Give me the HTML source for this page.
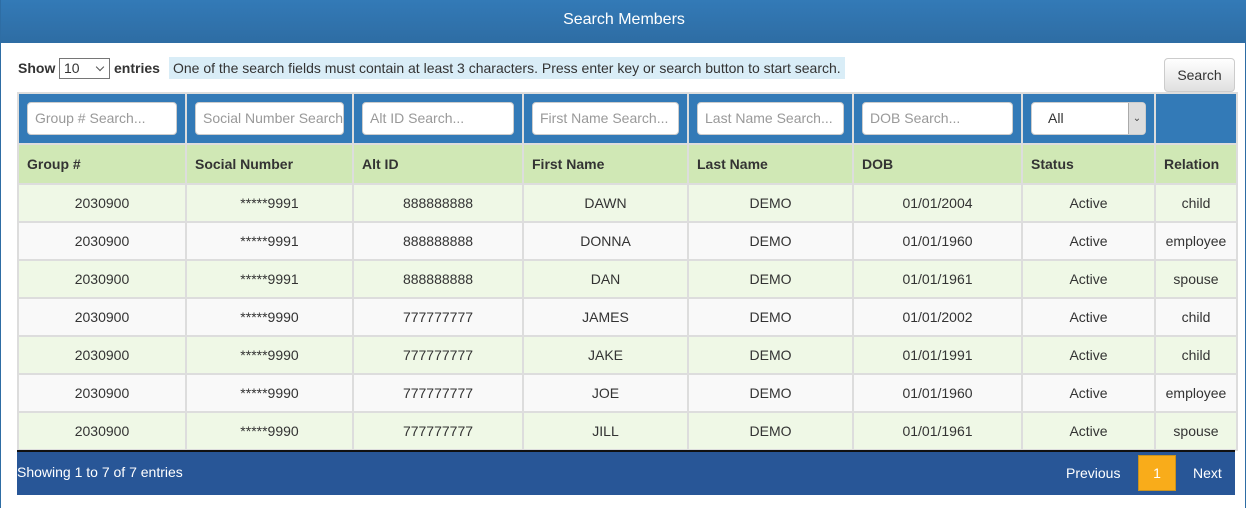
<!DOCTYPE html>
<html><head><style>
*{box-sizing:border-box;margin:0;padding:0}
body{width:1246px;height:508px;background:#fff;font-family:"Liberation Sans",Arial,sans-serif;font-size:14px;color:#333;position:relative;overflow:hidden;border-left:1px solid #2e6da4;border-right:1px solid #2e6da4}
.hdr{position:absolute;left:0;top:0;width:1246px;height:43px;background:linear-gradient(#337ab7,#2e6da4);color:#fff;font-size:16px;text-align:center;line-height:40px;border-bottom:1px solid #2e6da4}
.show{position:absolute;left:17px;top:58px;font-weight:bold;font-size:14px;line-height:20px}
.sel{position:absolute;left:58px;top:58px;width:51px;height:21px;border:1px solid #767676;font-size:14px;padding-left:4px;line-height:19px;font-weight:normal}
.sel:after{content:"";position:absolute;right:6px;top:5px;width:5px;height:5px;border-right:1px solid #555;border-bottom:1px solid #555;transform:rotate(45deg)}
.ent{position:absolute;left:113px;top:58px;font-weight:bold;line-height:20px}
.info{position:absolute;left:168px;top:57px;background:#d9edf7;padding:0 4px;line-height:22px;height:22px}
.sbtn{position:absolute;left:1163px;top:58px;width:71px;height:34px;border:1px solid #ccc;border-radius:4px;background:linear-gradient(#fff,#e0e0e0);text-align:center;line-height:32px}
table{position:absolute;left:16px;top:92px;border-collapse:collapse;table-layout:fixed;width:1219px}
td,th{border:2px solid #ddd}
.f td{background:#337ab7;height:51px;padding:0 8px}
.inp{height:33px;background:#fff;border:1px solid #ccc;border-radius:4px;color:#999;padding:0 7px;line-height:31px;white-space:nowrap;overflow:hidden;font-size:14px;position:relative}
.h th{background:#d0e8b5;height:40px;text-align:left;padding-left:8px;font-size:14px}
.r td{height:38px;text-align:center;background:#f9f9f9}
.r:nth-child(odd) td{background:#eff8e6}
.foot{position:absolute;left:16px;top:450px;width:1218px;height:45px;background:#285697;border-top:2px solid #111;color:#fff}
.foot .s{position:absolute;left:0;top:12px}
.pg{position:absolute;top:13px;font-size:14px}
.one{position:absolute;left:1121px;top:3px;width:38px;height:36px;background:#f9ac1a;border:1px solid #c9921f;text-align:center;line-height:34px}
</style></head><body>
<div class="hdr">Search Members</div>
<div class="show">Show</div><div class="sel">10</div><div class="ent">entries</div>
<div class="info">One of the search fields must contain at least 3 characters. Press enter key or search button to start search.</div>
<div class="sbtn">Search</div>
<table>
<colgroup><col style="width:168px"><col style="width:167px"><col style="width:170px"><col style="width:165px"><col style="width:165px"><col style="width:169px"><col style="width:133px"><col style="width:82px"></colgroup>
<tr class="f"><td><div class="inp">Group # Search...</div></td><td><div class="inp">Social Number Search</div></td><td><div class="inp">Alt ID Search...</div></td><td><div class="inp">First Name Search...</div></td><td><div class="inp">Last Name Search...</div></td><td><div class="inp">DOB Search...</div></td><td><div class="inp" style="color:#333;padding-left:16px">All<span style="position:absolute;right:0;top:0;width:17px;height:31px;background:#ddd;border-left:1px solid #aaa;text-align:center;font-size:10px;color:#444">&#8964;</span></div></td><td></td></tr>
<tr class="h"><th>Group #</th><th>Social Number</th><th>Alt ID</th><th>First Name</th><th>Last Name</th><th>DOB</th><th>Status</th><th>Relation</th></tr>
<tbody>
<tr class="r"><td>2030900</td><td>*****9991</td><td>888888888</td><td>DAWN</td><td>DEMO</td><td>01/01/2004</td><td>Active</td><td>child</td></tr>
<tr class="r"><td>2030900</td><td>*****9991</td><td>888888888</td><td>DONNA</td><td>DEMO</td><td>01/01/1960</td><td>Active</td><td>employee</td></tr>
<tr class="r"><td>2030900</td><td>*****9991</td><td>888888888</td><td>DAN</td><td>DEMO</td><td>01/01/1961</td><td>Active</td><td>spouse</td></tr>
<tr class="r"><td>2030900</td><td>*****9990</td><td>777777777</td><td>JAMES</td><td>DEMO</td><td>01/01/2002</td><td>Active</td><td>child</td></tr>
<tr class="r"><td>2030900</td><td>*****9990</td><td>777777777</td><td>JAKE</td><td>DEMO</td><td>01/01/1991</td><td>Active</td><td>child</td></tr>
<tr class="r"><td>2030900</td><td>*****9990</td><td>777777777</td><td>JOE</td><td>DEMO</td><td>01/01/1960</td><td>Active</td><td>employee</td></tr>
<tr class="r"><td>2030900</td><td>*****9990</td><td>777777777</td><td>JILL</td><td>DEMO</td><td>01/01/1961</td><td>Active</td><td>spouse</td></tr>
</tbody></table>
<div class="foot"><div class="s">Showing 1 to 7 of 7 entries</div><div class="pg" style="left:1049px">Previous</div><div class="one">1</div><div class="pg" style="left:1176px">Next</div></div>
</body></html>
